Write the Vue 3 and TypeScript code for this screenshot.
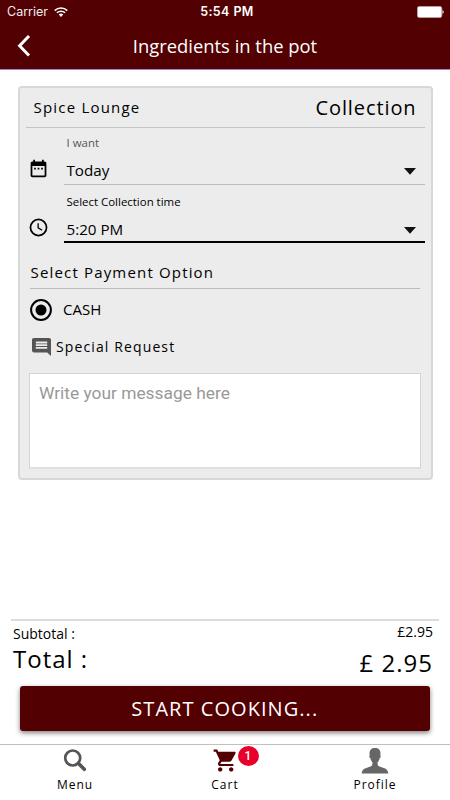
<script setup lang="ts">
import { ref } from 'vue'

interface Field {
  icon: 'calendar' | 'clock'
  label: string
  value: string
  active: boolean
}

const fields: Field[] = [
  { icon: 'calendar', label: 'I want', value: 'Today', active: false },
  { icon: 'clock', label: 'Select Collection time', value: '5:20 PM', active: true },
]

const message = ref('')
const cartCount = 1
</script>

<template>
  <div class="screen">
    <header class="header">
      <div class="status">
        <div class="carrier">
          <span>Carrier</span>
          <svg class="wifi" viewBox="0 0 14 10">
            <path d="M.7 3.6a9 9 0 0 1 12.6 0M2.9 5.8a5.9 5.9 0 0 1 8.2 0" fill="none" stroke="#fff" stroke-width="1.5" />
            <path d="M4.7 7.6a3.3 3.3 0 0 1 4.6 0L7 9.9z" fill="#fff" />
          </svg>
        </div>
        <span class="clock">5:54 PM</span>
        <svg class="battery" viewBox="0 0 27 12">
          <rect x=".4" y=".4" width="24.4" height="11.2" rx="2" fill="#fff" stroke="#c3a9a9" stroke-width=".8" />
          <path d="M25.5 4.2c1.6.6 1.6 3 0 3.6z" fill="#fff" />
        </svg>
      </div>
      <div class="titlebar">
        <svg class="back" viewBox="0 0 14 22"><path d="M12 1 2.6 10.700l9.400 9.800" fill="none" stroke="#fff" stroke-width="3" /></svg>
        <h1>Ingredients in the pot</h1>
      </div>
    </header>

    <main class="card">
      <div class="shop">
        <span class="shop-name">Spice Lounge</span>
        <span class="shop-mode">Collection</span>
      </div>

      <div v-for="field in fields" :key="field.label" class="field" :class="{ active: field.active }">
        <svg v-if="field.icon === 'calendar'" class="field-icon" viewBox="0 0 24 24">
          <path d="M9 11H7v2h2v-2zm4 0h-2v2h2v-2zm4 0h-2v2h2v-2zm2-7h-1V2h-2v2H8V2H6v2H5c-1.1 0-2 .9-2 2v14c0 1.100.9 2 2 2h14c1.100 0 2-.9 2-2V6c0-1.100-.9-2-2-2zm0 16H5V9h14v11z" />
        </svg>
        <svg v-else class="field-icon" viewBox="0 0 24 24">
          <circle cx="12" cy="12" r="9.200" fill="none" stroke="#000" stroke-width="2" />
          <path d="M11.600 7v5.400l4.600 2.700" fill="none" stroke="#000" stroke-width="1.500" />
        </svg>
        <div class="field-body">
          <span class="field-label">{{ field.label }}</span>
          <div class="field-value">
            <span>{{ field.value }}</span>
            <svg class="caret" viewBox="0 0 12 7"><path d="M0 0h12L6 6.700z" fill="#111" /></svg>
          </div>
        </div>
      </div>

      <h2 class="payment">Select Payment Option</h2>
      <div class="option">
        <svg class="radio" viewBox="0 0 22 22">
          <circle cx="11" cy="11" r="9.900" fill="none" stroke="#000" stroke-width="2" />
          <circle cx="11" cy="11" r="5.500" />
        </svg>
        <span>CASH</span>
      </div>
      <div class="request">
        <svg class="comment" viewBox="2 2 20 20" preserveAspectRatio="none">
          <path fill="#555" d="M21.990 4c0-1.100-.89-2-1.990-2H4c-1.100 0-2 .9-2 2v12c0 1.100.9 2 2 2h14l4 4-.01-18zM18 14H6v-2h12v2zm0-3H6V9h12v2zm0-3H6V6h12v2z" />
        </svg>
        <span>Special Request</span>
      </div>
      <textarea v-model="message" class="message" placeholder="Write your message here"></textarea>
    </main>

    <section class="summary">
      <div class="subtotal"><span>Subtotal :</span><span class="sub-amount">£2.95</span></div>
      <div class="total"><span>Total :</span><span class="amount">£ 2.95</span></div>
      <button class="start">START COOKING...</button>
    </section>

    <nav class="tabs">
      <a class="tab">
        <svg class="tab-icon" viewBox="0 0 24 26">
          <circle cx="9.700" cy="10" r="7.500" fill="none" stroke="#555" stroke-width="2.700" />
          <path d="m15.300 15.300 6 6" stroke="#555" stroke-width="3.600" stroke-linecap="round" />
        </svg>
        <span>Menu</span>
      </a>
      <a class="tab">
        <span class="cart-wrap">
          <svg class="tab-icon" viewBox="0 0 24 26">
            <g fill="#520002" transform="translate(-.5 -.6) scale(1.100)">
              <path d="M7 18c-1.100 0-1.990.9-1.990 2S5.900 22 7 22s2-.9 2-2-.9-2-2-2zM1 2v2h2l3.600 7.590-1.350 2.450c-.16.280-.25.610-.25.960 0 1.100.9 2 2 2h12v-2H7.420c-.14 0-.25-.11-.25-.25l.03-.12.9-1.630h7.450c.75 0 1.410-.41 1.750-1.030l3.580-6.490c.08-.14.120-.31.120-.48 0-.55-.45-1-1-1H5.210l-.94-2H1zm16 16c-1.100 0-1.990.9-1.990 2s.89 2 1.990 2 2-.9 2-2-.9-2-2-2z" />
            </g>
          </svg>
          <b class="badge">{{ cartCount }}</b>
        </span>
        <span>Cart</span>
      </a>
      <a class="tab">
        <svg class="tab-icon person" viewBox="0 0 28 26">
          <path fill="#666" d="M14 0c3.600 0 5.500 2 5.500 5.400 0 .8-.1 1.300-.3 1.900.9.300.6 2.500-.7 3.300-.4 1.700-1 2.800-1.900 3.700v2.200c.3 1.800 2.700 2.300 5.400 3.200C25.300 20.800 27 21.800 27.300 25.500H.7C1 21.800 2.700 20.800 6 19.700c2.700-.9 5.100-1.400 5.400-3.200v-2.200c-.9-.9-1.500-2-1.900-3.700-1.300-.8-1.600-3-.7-3.300-.2-.6-.3-1.100-.3-1.900C8.500 2 10.400 0 14 0z" />
        </svg>
        <span>Profile</span>
      </a>
    </nav>
  </div>
</template>

<style>
body {
  margin: 0;
  background: #fff;
}
</style>

<style scoped>
* {
  box-sizing: border-box;
}
.screen {
  width: 450px;
  height: 800px;
  display: flex;
  flex-direction: column;
  overflow: hidden;
  background: #fff;
  color: #000;
  font-family: 'Open Sans', 'Noto Sans', sans-serif;
}
.header {
  height: 70px;
  flex: none;
  background: #520002;
  border-bottom: 1px solid #9a88b8;
  color: #fff;
}
.status {
  height: 23px;
  display: grid;
  grid-template-columns: 1fr auto 1fr;
  align-items: center;
  padding: 0 6px 0 7px;
  font-family: Inter, 'Liberation Sans', sans-serif;
}
.carrier {
  display: flex;
  align-items: center;
  gap: 6px;
  font-size: 12.500px;
  color: #eee;
}
.wifi {
  width: 14px;
  height: 10px;
}
.clock {
  padding-left: 3px;
  font-size: 12.500px;
  font-weight: 600;
  letter-spacing: 0.400px;
}
.battery {
  width: 27px;
  height: 12px;
  justify-self: end;
}
.titlebar {
  height: 46px;
  display: grid;
  grid-template-columns: 40px 1fr 40px;
  align-items: center;
}
.back {
  width: 14px;
  height: 22px;
  margin-left: 17px;
}
h1 {
  margin: 0 0 1px;
  font-size: 18.400px;
  font-weight: 400;
  line-height: 24px;
  text-align: center;
}
.card {
  flex: none;
  height: 394px;
  margin: 16px 17.500px 0;
  padding: 0 6px;
  background: #ececec;
  border: 2px solid #d8d8d8;
  border-radius: 4px;
}
.shop {
  height: 40px;
  display: flex;
  justify-content: space-between;
  align-items: center;
  padding: 0 8px;
  border-bottom: 1px solid #c4c4c4;
}
.shop-name {
  margin-top: -2px;
  font-size: 15px;
  letter-spacing: 1.200px;
}
.shop-mode {
  font-size: 20px;
  letter-spacing: 0.900px;
}
.field {
  display: flex;
  height: 57px;
  padding-left: 2px;
}
.field-icon {
  width: 21px;
  height: 21px;
  margin-top: 30px;
}
.active .field-icon {
  margin-top: 32px;
}
.field-body {
  flex: 1;
  margin-left: 15.500px;
  padding-left: 2.500px;
  border-bottom: 1px solid #bbb;
}
.field-label {
  display: block;
  margin-top: 7px;
  font-size: 11.450px;
  line-height: 16px;
  color: #555;
}
.field-value {
  display: flex;
  align-items: center;
  justify-content: space-between;
  height: 22px;
  margin-top: 8px;
  padding-right: 8.500px;
  font-size: 15.200px;
  line-height: 22px;
}
.field.active {
  height: 58px;
}
.field.active .field-label {
  margin-top: 9px;
  color: #000;
}
.field.active .field-value {
  margin-top: 8px;
}
.field.active .field-body {
  border-bottom: 2px solid #000;
}
.caret {
  width: 12px;
  height: 7px;
  margin-top: 2px;
}
.payment {
  height: 46px;
  margin: 0 5px 0 4px;
  padding: 19px 0 0 1px;
  border-bottom: 1px solid #bbb;
  font-size: 15px;
  font-weight: 400;
  line-height: 21px;
  letter-spacing: 1.170px;
}
.option {
  height: 41px;
  display: flex;
  align-items: center;
  padding-left: 4px;
  gap: 11.500px;
  font-size: 15px;
}
.option span {
  margin-top: -2px;
}
.radio {
  width: 22px;
  height: 22px;
}
.request {
  height: 34px;
  display: flex;
  align-items: center;
  gap: 5px;
  padding-left: 6.500px;
  font-size: 14px;
  letter-spacing: 1.120px;
}
.request span {
  margin-top: -2px;
}
.comment {
  width: 19px;
  height: 18px;
}
.message {
  display: block;
  width: 392px;
  height: 96px;
  margin: 9px 0 0 3px;
  padding: 8px 9.500px;
  border: 1px solid #d4d4d4;
  border-bottom: 2px solid #e0e0e0;
  border-radius: 0;
  outline: none;
  resize: none;
  background: #fff;
  font: 17.350px/22px Roboto, sans-serif;
}
.message::placeholder {
  color: #999;
  opacity: 1;
}
.summary {
  flex: none;
  height: 112px;
  margin: 139px 11px 0;
  border-top: 2px solid #dcdcdc;
}
.subtotal {
  height: 24px;
  display: flex;
  justify-content: space-between;
  align-items: center;
  padding: 0 6px 0 2px;
  font-size: 14px;
}
.sub-amount {
  margin-top: -4px;
}
.total {
  height: 32px;
  display: flex;
  justify-content: space-between;
  align-items: center;
  padding: 0 6px 4px 2px;
  font-size: 24px;
  line-height: 28px;
  letter-spacing: 1px;
}
.amount {
  margin-top: 7px;
}
.start {
  display: block;
  width: 410.500px;
  height: 45px;
  margin: 9px 0 0 8.500px;
  padding: 0;
  border: 0;
  border-radius: 3px;
  background: #520002;
  box-shadow: 0 2px 5px rgba(0, 0, 0, 0.5);
  color: #fff;
  font: 20px 'Open Sans', sans-serif;
  letter-spacing: 1.050px;
}
.tabs {
  flex: none;
  display: grid;
  grid-template-columns: repeat(3, 1fr);
  height: 56px;
  margin-top: 13px;
  border-top: 1px solid #c0c0c0;
}
.tab {
  display: flex;
  flex-direction: column;
  align-items: center;
  padding-top: 3px;
  font-size: 12px;
  line-height: 16px;
  letter-spacing: 1px;
}
.tab-icon {
  display: block;
  width: 24px;
  height: 26px;
  margin-bottom: 3px;
}
.person {
  width: 28px;
}
.cart-wrap {
  position: relative;
}
.badge {
  position: absolute;
  left: 24.500px;
  top: -2.500px;
  width: 21px;
  height: 20px;
  border-radius: 50%;
  background: #e8002b;
  color: #fff;
  font: 500 12px/20px Roboto, sans-serif;
  letter-spacing: 0;
  text-align: center;
}
</style>
